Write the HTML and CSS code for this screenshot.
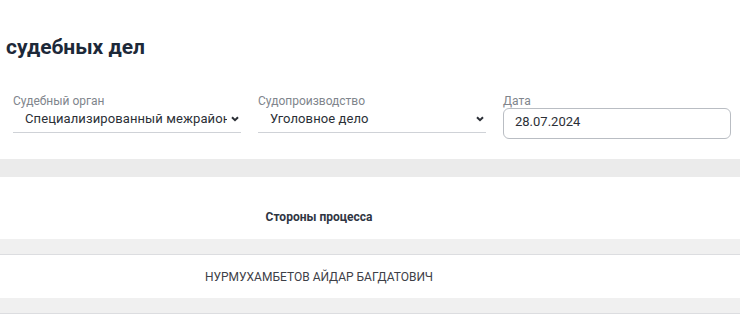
FILE: index.html
```html
<!DOCTYPE html>
<html lang="ru">
<head>
    <meta charset="UTF-8">
    <meta name="viewport" content="width=device-width, initial-scale=1.0">
    <title>Поиск судебных дел</title>
    <link rel="stylesheet" href="styles.css">
</head>
<body>
    <h1 class="pageTitle">судебных дел</h1>

    <div class="filters">
        <div class="field">
            <label class="fieldLabel">Судебный орган</label>
            <div class="select">
                <span class="selectValue">Специализированный межрайонный</span>
                <svg class="chevron" width="8" height="6" viewBox="0 0 8 6"><path d="M1 1.2l3 3 3-3" fill="none" stroke="#2b2f36" stroke-width="2"/></svg>
            </div>
        </div>
        <div class="field">
            <label class="fieldLabel">Судопроизводство</label>
            <div class="select">
                <span class="selectValue">Уголовное дело</span>
                <svg class="chevron" width="8" height="6" viewBox="0 0 8 6"><path d="M1 1.2l3 3 3-3" fill="none" stroke="#2b2f36" stroke-width="2"/></svg>
            </div>
        </div>
        <div class="field">
            <label class="fieldLabel" for="dateInput">Дата</label>
            <input id="dateInput" class="dateInput" type="text" value="28.07.2024">
        </div>
    </div>

    <div class="casesTable">
        <div class="band"></div>
        <div class="tableRow tableHead">
            <div class="cell">Стороны процесса</div>
            <div class="cell"></div>
        </div>
        <div class="band bandLine"></div>
        <div class="tableRow">
            <div class="cell">НУРМУХАМБЕТОВ АЙДАР БАГДАТОВИЧ</div>
            <div class="cell"></div>
        </div>
        <div class="band bandLine"></div>
    </div>
</body>
</html>
```

FILE: styles.css
```css
body {
    margin: 0;
    background-color: white;
    font-family: Roboto, "Noto Sans", sans-serif;
    color: #2b2f36;
}

.pageTitle {
    margin: 0;
    padding: 34px 0 0 6px;
    font-size: 21px;
    line-height: 26px;
    font-weight: 700;
    color: #1d2939;
}

.filters {
    display: grid;
    grid-template-columns: 228px 228px 228px;
    column-gap: 17px;
    padding: 34px 0 0 13px;
}

.field {
    display: flex;
    flex-direction: column;
}

.fieldLabel {
    font-size: 12px;
    line-height: 14px;
    color: #80858c;
}

.select {
    display: flex;
    align-items: center;
    padding: 3px 2px 6px 12px;
    border-bottom: 1px solid #cfd2d7;
}

.selectValue {
    flex: 1;
    overflow: hidden;
    white-space: nowrap;
    text-overflow: clip;
    font-size: 13px;
    letter-spacing: 0.1px;
    line-height: 15px;
    color: #2b2f36;
}

.chevron {
    flex-shrink: 0;
    margin-left: 4px;
}

.dateInput {
    box-sizing: border-box;
    width: 100%;
    height: 31px;
    margin: 0;
    padding: 0 10px 4px 11px;
    border: 1px solid #b9bdc3;
    border-radius: 6px;
    font-family: Roboto, "Noto Sans", sans-serif;
    font-size: 13px;
    color: #2b2f36;
    outline: none;
}

.casesTable {
    margin-top: 20px;
}

.band {
    height: 18px;
    background-color: #ebebeb;
}

.bandLine {
    height: 15px;
    background-color: #f0f0f0;
    border-bottom: 1px solid #dcdde0;
}

.tableRow {
    display: grid;
    grid-template-columns: 638px 1fr;
}

.tableRow .cell {
    text-align: center;
    font-size: 12px;
    line-height: 14px;
    padding: 15px 0 14px;
    color: #3d4047;
}

.tableHead .cell {
    padding: 33px 0 15px;
    font-weight: 700;
    color: #2f3542;
}
```
